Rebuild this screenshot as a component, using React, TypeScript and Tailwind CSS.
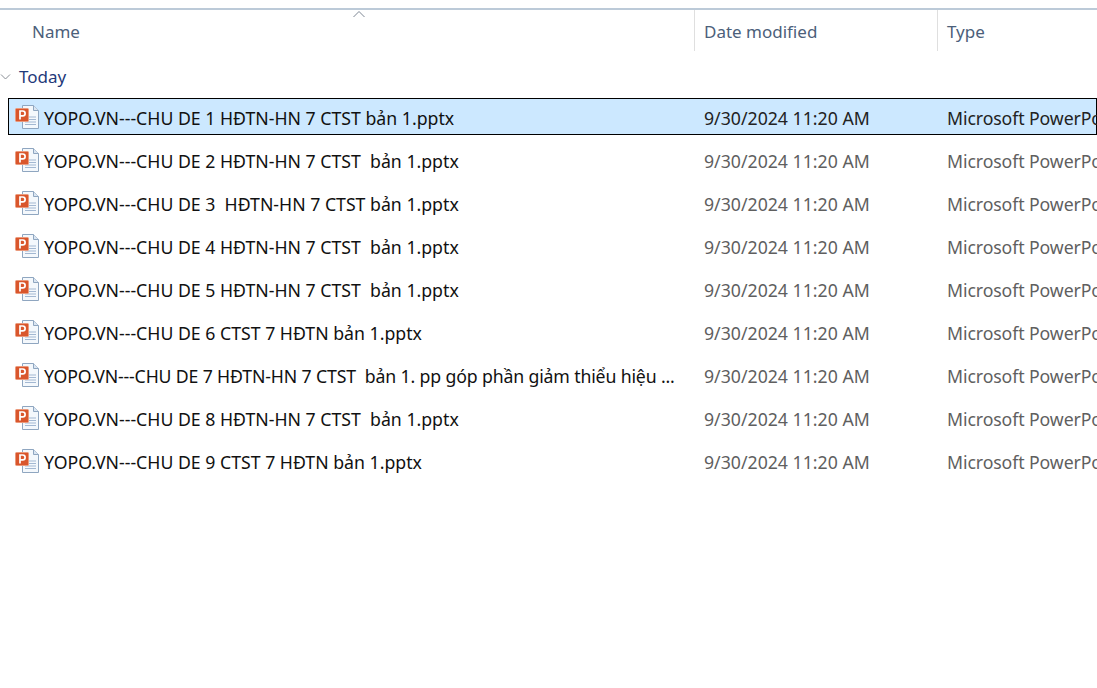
import React from 'react';

const files = [
  'YOPO.VN---CHU DE 1 HĐTN-HN 7 CTST bản 1.pptx',
  'YOPO.VN---CHU DE 2 HĐTN-HN 7 CTST  bản 1.pptx',
  'YOPO.VN---CHU DE 3  HĐTN-HN 7 CTST bản 1.pptx',
  'YOPO.VN---CHU DE 4 HĐTN-HN 7 CTST  bản 1.pptx',
  'YOPO.VN---CHU DE 5 HĐTN-HN 7 CTST  bản 1.pptx',
  'YOPO.VN---CHU DE 6 CTST 7 HĐTN bản 1.pptx',
  'YOPO.VN---CHU DE 7 HĐTN-HN 7 CTST  bản 1. pp góp phần giảm thiểu hiệu ...',
  'YOPO.VN---CHU DE 8 HĐTN-HN 7 CTST  bản 1.pptx',
  'YOPO.VN---CHU DE 9 CTST 7 HĐTN bản 1.pptx',
];

const PptxIcon = () => (
  <svg width="24" height="24" viewBox="0 0 24 24" className="shrink-0 mt-[1px]">
    <path d="M7.500 0.500h11l5 5v18h-16z" fill="#f4f8fc" stroke="#8fa6c0" />
    <path d="M18.500 0.500v5h5" fill="#dbe6f2" stroke="#8fa6c0" />
    <path d="M10 12h11M10 14.500h11M10 17h11M10 19.500h11" stroke="#a3b8d2" strokeWidth="1" />
    <rect x="0.500" y="3.500" width="13" height="13" rx="1" fill="#d9562c" stroke="#eb9a7c" />
    <path d="M5 14.500V6h2.700a2.400 2.400 0 0 1 0 4.800H5" fill="none" stroke="#fff" strokeWidth="1.700" />
  </svg>
);

export default function App() {
  return (
    <div className="w-[1097px] h-[688px] overflow-hidden bg-white font-['Noto_Sans',sans-serif] text-[17px] relative">
      <div className="mt-2 border-t-2 border-[#bccad8] flex h-[43px] text-[#4c607a]">
        <div className="w-[694px] shrink-0 pl-[32px] pt-[9px]">Name</div>
        <div className="w-[243px] shrink-0 border-l border-[#dfdfdf] pl-[9px] pt-[9px]">Date modified</div>
        <div className="flex-1 border-l border-[#dfdfdf] pl-[9px] pt-[9px]">Type</div>
      </div>
      <svg width="14" height="8" viewBox="0 0 14 8" className="absolute left-[352px] top-[10px]">
        <path d="M1.500 7L7 1.500 12.500 7" fill="none" stroke="#7d8794" strokeWidth="1" />
      </svg>

      <div className="flex items-center h-[36px] mt-[8px] text-[#1f3a7a]">
        <svg width="12" height="8" viewBox="0 0 12 8" className="mr-[7px]">
          <path d="M1 1.500l4.500 4.500L10 1.500" fill="none" stroke="#8a8f96" strokeWidth="1" />
        </svg>
        <span>Today</span>
      </div>

      <div className="mt-[3px] flex flex-col gap-[6px] text-[17.7px] text-[#111]">
        {files.map((name, i) => (
          <div
            key={name}
            className={`ml-2 h-[37px] flex items-center border ${i === 0 ? 'bg-[#cce8ff] border-black' : 'border-transparent'}`}
          >
            <div className="w-[685px] shrink-0 flex items-center pl-[6px] whitespace-pre overflow-hidden">
              <PptxIcon />
              <span className={`ml-[5px] pt-[4px] ${i === 6 ? 'tracking-[-0.15px]' : ''}`}>{name}</span>
            </div>
            <div className={`w-[243px] shrink-0 pl-[10px] pt-[4px] whitespace-nowrap ${i === 0 ? 'text-[#222]' : 'text-[#5f5f5f]'}`}>
              9/30/2024 11:20 AM
            </div>
            <div className={`pl-[10px] pt-[4px] whitespace-nowrap tracking-[-0.1px] ${i === 0 ? 'text-[#222]' : 'text-[#5f5f5f]'}`}>
              Microsoft PowerPoint Presentation
            </div>
          </div>
        ))}
      </div>
    </div>
  );
}
